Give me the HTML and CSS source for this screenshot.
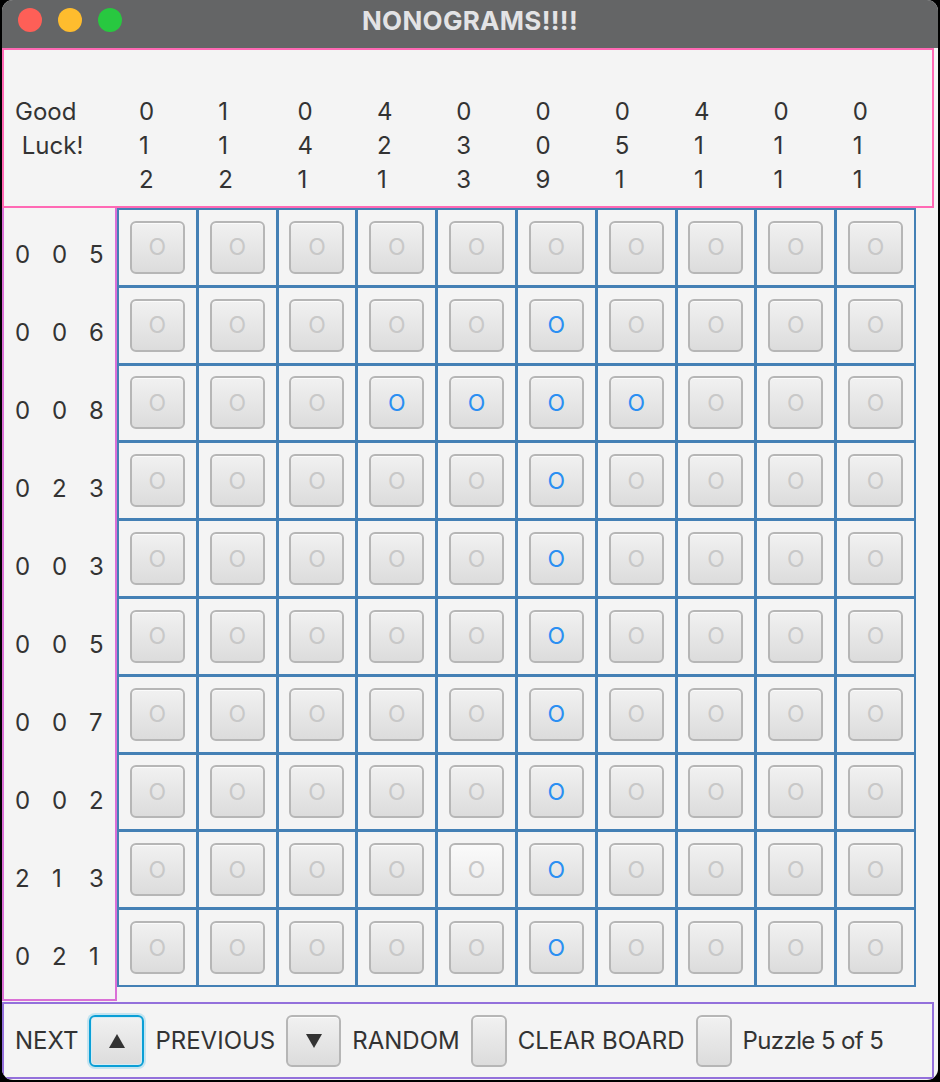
FILE: index.html
```html
<!DOCTYPE html>
<html>
  <head>
    <title>NONOGRAMS!!!!</title>
    <link rel="stylesheet" href="styles.css">
  </head>
  <body>
    <div class="window">
      <div class="titlebar">
        <div class="lights">
          <span class="light red"></span>
          <span class="light yellow"></span>
          <span class="light green"></span>
        </div>
        <div class="title">NONOGRAMS!!!!</div>
        <div></div>
      </div>

      <div class="top-clues">
        <div class="greeting">Good
 Luck!</div>
        <div class="col-clue">0<br>1<br>2</div>
        <div class="col-clue">1<br>1<br>2</div>
        <div class="col-clue">0<br>4<br>1</div>
        <div class="col-clue">4<br>2<br>1</div>
        <div class="col-clue">0<br>3<br>3</div>
        <div class="col-clue">0<br>0<br>9</div>
        <div class="col-clue">0<br>5<br>1</div>
        <div class="col-clue">4<br>1<br>1</div>
        <div class="col-clue">0<br>1<br>1</div>
        <div class="col-clue">0<br>1<br>1</div>
      </div>

      <div class="middle">
        <div class="row-clues">
          <div class="row-clue"><span>0</span><span>0</span><span>5</span></div>
          <div class="row-clue"><span>0</span><span>0</span><span>6</span></div>
          <div class="row-clue"><span>0</span><span>0</span><span>8</span></div>
          <div class="row-clue"><span>0</span><span>2</span><span>3</span></div>
          <div class="row-clue"><span>0</span><span>0</span><span>3</span></div>
          <div class="row-clue"><span>0</span><span>0</span><span>5</span></div>
          <div class="row-clue"><span>0</span><span>0</span><span>7</span></div>
          <div class="row-clue"><span>0</span><span>0</span><span>2</span></div>
          <div class="row-clue"><span>2</span><span>1</span><span>3</span></div>
          <div class="row-clue"><span>0</span><span>2</span><span>1</span></div>
        </div>

        <div class="grid">
          <!-- row 1 -->
          <div class="slot"><button class="cell">O</button></div>
          <div class="slot"><button class="cell">O</button></div>
          <div class="slot"><button class="cell">O</button></div>
          <div class="slot"><button class="cell">O</button></div>
          <div class="slot"><button class="cell">O</button></div>
          <div class="slot"><button class="cell">O</button></div>
          <div class="slot"><button class="cell">O</button></div>
          <div class="slot"><button class="cell">O</button></div>
          <div class="slot"><button class="cell">O</button></div>
          <div class="slot"><button class="cell">O</button></div>
          <!-- row 2 -->
          <div class="slot"><button class="cell">O</button></div>
          <div class="slot"><button class="cell">O</button></div>
          <div class="slot"><button class="cell">O</button></div>
          <div class="slot"><button class="cell">O</button></div>
          <div class="slot"><button class="cell">O</button></div>
          <div class="slot"><button class="cell on">O</button></div>
          <div class="slot"><button class="cell">O</button></div>
          <div class="slot"><button class="cell">O</button></div>
          <div class="slot"><button class="cell">O</button></div>
          <div class="slot"><button class="cell">O</button></div>
          <!-- row 3 -->
          <div class="slot"><button class="cell">O</button></div>
          <div class="slot"><button class="cell">O</button></div>
          <div class="slot"><button class="cell">O</button></div>
          <div class="slot"><button class="cell on">O</button></div>
          <div class="slot"><button class="cell on">O</button></div>
          <div class="slot"><button class="cell on">O</button></div>
          <div class="slot"><button class="cell on">O</button></div>
          <div class="slot"><button class="cell">O</button></div>
          <div class="slot"><button class="cell">O</button></div>
          <div class="slot"><button class="cell">O</button></div>
          <!-- row 4 -->
          <div class="slot"><button class="cell">O</button></div>
          <div class="slot"><button class="cell">O</button></div>
          <div class="slot"><button class="cell">O</button></div>
          <div class="slot"><button class="cell">O</button></div>
          <div class="slot"><button class="cell">O</button></div>
          <div class="slot"><button class="cell on">O</button></div>
          <div class="slot"><button class="cell">O</button></div>
          <div class="slot"><button class="cell">O</button></div>
          <div class="slot"><button class="cell">O</button></div>
          <div class="slot"><button class="cell">O</button></div>
          <!-- row 5 -->
          <div class="slot"><button class="cell">O</button></div>
          <div class="slot"><button class="cell">O</button></div>
          <div class="slot"><button class="cell">O</button></div>
          <div class="slot"><button class="cell">O</button></div>
          <div class="slot"><button class="cell">O</button></div>
          <div class="slot"><button class="cell on">O</button></div>
          <div class="slot"><button class="cell">O</button></div>
          <div class="slot"><button class="cell">O</button></div>
          <div class="slot"><button class="cell">O</button></div>
          <div class="slot"><button class="cell">O</button></div>
          <!-- row 6 -->
          <div class="slot"><button class="cell">O</button></div>
          <div class="slot"><button class="cell">O</button></div>
          <div class="slot"><button class="cell">O</button></div>
          <div class="slot"><button class="cell">O</button></div>
          <div class="slot"><button class="cell">O</button></div>
          <div class="slot"><button class="cell on">O</button></div>
          <div class="slot"><button class="cell">O</button></div>
          <div class="slot"><button class="cell">O</button></div>
          <div class="slot"><button class="cell">O</button></div>
          <div class="slot"><button class="cell">O</button></div>
          <!-- row 7 -->
          <div class="slot"><button class="cell">O</button></div>
          <div class="slot"><button class="cell">O</button></div>
          <div class="slot"><button class="cell">O</button></div>
          <div class="slot"><button class="cell">O</button></div>
          <div class="slot"><button class="cell">O</button></div>
          <div class="slot"><button class="cell on">O</button></div>
          <div class="slot"><button class="cell">O</button></div>
          <div class="slot"><button class="cell">O</button></div>
          <div class="slot"><button class="cell">O</button></div>
          <div class="slot"><button class="cell">O</button></div>
          <!-- row 8 -->
          <div class="slot"><button class="cell">O</button></div>
          <div class="slot"><button class="cell">O</button></div>
          <div class="slot"><button class="cell">O</button></div>
          <div class="slot"><button class="cell">O</button></div>
          <div class="slot"><button class="cell">O</button></div>
          <div class="slot"><button class="cell on">O</button></div>
          <div class="slot"><button class="cell">O</button></div>
          <div class="slot"><button class="cell">O</button></div>
          <div class="slot"><button class="cell">O</button></div>
          <div class="slot"><button class="cell">O</button></div>
          <!-- row 9 -->
          <div class="slot"><button class="cell">O</button></div>
          <div class="slot"><button class="cell">O</button></div>
          <div class="slot"><button class="cell">O</button></div>
          <div class="slot"><button class="cell">O</button></div>
          <div class="slot"><button class="cell hover">O</button></div>
          <div class="slot"><button class="cell on">O</button></div>
          <div class="slot"><button class="cell">O</button></div>
          <div class="slot"><button class="cell">O</button></div>
          <div class="slot"><button class="cell">O</button></div>
          <div class="slot"><button class="cell">O</button></div>
          <!-- row 10 -->
          <div class="slot"><button class="cell">O</button></div>
          <div class="slot"><button class="cell">O</button></div>
          <div class="slot"><button class="cell">O</button></div>
          <div class="slot"><button class="cell">O</button></div>
          <div class="slot"><button class="cell">O</button></div>
          <div class="slot"><button class="cell on">O</button></div>
          <div class="slot"><button class="cell">O</button></div>
          <div class="slot"><button class="cell">O</button></div>
          <div class="slot"><button class="cell">O</button></div>
          <div class="slot"><button class="cell">O</button></div>
        </div>
      </div>

      <div class="controls">
        <span class="label">NEXT</span>
        <button class="btn arrow focused">
          <svg width="16" height="14" viewBox="0 0 16 14"><polygon points="8,0 16,14 0,14" fill="#333"/></svg>
        </button>
        <span class="label">PREVIOUS</span>
        <button class="btn arrow">
          <svg width="16" height="14" viewBox="0 0 16 14"><polygon points="0,0 16,0 8,14" fill="#333"/></svg>
        </button>
        <span class="label">RANDOM</span>
        <button class="btn blank"></button>
        <span class="label">CLEAR BOARD</span>
        <button class="btn blank"></button>
        <span class="label puzzle">Puzzle 5 of 5</span>
      </div>
    </div>
  </body>
</html>
```

FILE: styles.css
```css
body {
  margin: 0;
  background-color: #000;
  font-family: Inter, "Liberation Sans", sans-serif;
  color: #333;
}

.window {
  margin-left: 2px;
  width: 936px;
  height: 1080px;
  background-color: #f4f4f4;
  border-radius: 11px;
  overflow: hidden;
  display: flex;
  flex-direction: column;
}

.titlebar {
  height: 48px;
  box-sizing: border-box;
  padding-bottom: 8px;
  background-color: #646566;
  display: grid;
  grid-template-columns: 1fr auto 1fr;
  align-items: center;
}

.lights {
  display: flex;
  gap: 16px;
  padding-left: 16px;
}

.light {
  width: 24px;
  height: 24px;
  border-radius: 50%;
}

.red { background-color: #fe5f57; }
.yellow { background-color: #febc2e; }
.green { background-color: #28c840; }

.title {
  color: #e3e3e5;
  font-weight: 700;
  font-size: 26px;
  letter-spacing: 0.3px;
}

/* column clues */
.top-clues {
  width: 932px;
  height: 160px;
  box-sizing: border-box;
  border: 2px solid #ff69b4;
  padding: 45px 0 0 11px;
  display: flex;
  font-size: 24px;
  line-height: 34px;
}

.greeting {
  width: 124px;
  white-space: pre;
}

.col-clue {
  width: 79.3px;
}

.middle {
  display: flex;
  height: 794px;
}

/* row clues */
.row-clues {
  width: 115px;
  height: 793px;
  flex-shrink: 0;
  box-sizing: border-box;
  border: 2px solid #da70d6;
  border-top: none;
  padding: 7px 0 0 11px;
  font-size: 24px;
}

.row-clue {
  height: 78px;
  display: flex;
  align-items: center;
}

.row-clue span {
  width: 37px;
  flex-shrink: 0;
}

.row-clue span:last-child {
  width: auto;
}

/* board */
.grid {
  width: 799px;
  height: 779px;
  box-sizing: border-box;
  padding: 2px;
  gap: 3px;
  background-color: #4480b5;
  display: grid;
  grid-template-columns: repeat(10, 1fr);
  grid-template-rows: repeat(10, 1fr);
}

.slot {
  background-color: #f4f4f4;
  display: flex;
  align-items: center;
  justify-content: center;
}

.cell {
  width: 55px;
  height: 53px;
  box-sizing: border-box;
  border: 2px solid #b6b6b6;
  border-radius: 6px;
  background: linear-gradient(#f1f1f1, #dcdcdc);
  box-shadow: inset 0 1px 0 #fbfbfb;
  font-family: Inter, "Liberation Sans", sans-serif;
  font-size: 23px;
  color: #c8c8c8;
  padding: 0;
}

.cell.on {
  color: #2b8ff2;
}

.cell.hover {
  background: linear-gradient(#fafafa, #ebebeb);
}

/* bottom bar */
.controls {
  width: 932px;
  height: 77px;
  box-sizing: border-box;
  border: 2px solid #9370db;
  padding-left: 11px;
  display: flex;
  align-items: center;
  gap: 11px;
}

.label {
  font-size: 24px;
}

.puzzle {
  letter-spacing: -0.6px;
}

.btn {
  height: 52px;
  box-sizing: border-box;
  border: 2px solid #b6b6b6;
  border-radius: 6px;
  background: linear-gradient(#f1f1f1, #dcdcdc);
  box-shadow: inset 0 1px 0 #fbfbfb;
  padding: 0;
  display: flex;
  align-items: center;
  justify-content: center;
}

.arrow {
  width: 55px;
}

.blank {
  width: 36px;
}

.focused {
  border-color: #0b9fd6;
  box-shadow: 0 0 0 2px #c4e4f0, inset 0 0 0 1px #d6ecf4;
}
```
